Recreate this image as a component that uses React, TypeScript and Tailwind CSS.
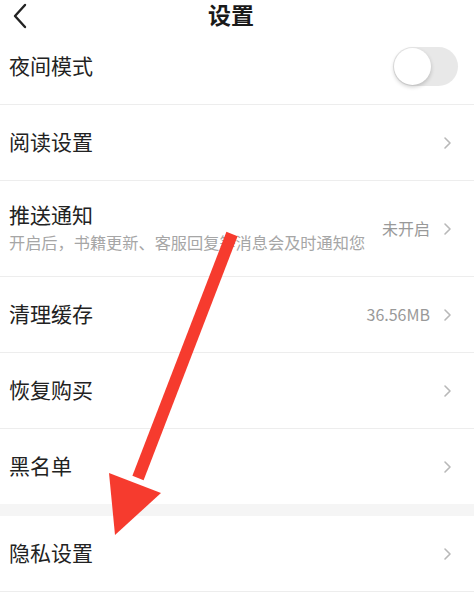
import React from "react";

const Chevron = () => (
  <svg width="10" height="14" viewBox="0 0 10 14" className="shrink-0">
    <path d="M3 2 L8 7 L3 12" fill="none" stroke="#b8b8b8" strokeWidth="1.6" strokeLinecap="round" strokeLinejoin="round" />
  </svg>
);

function Row({ title, sub, value, children }: { title: string; sub?: string; value?: string; children?: React.ReactNode }) {
  return (
    <div className={`flex items-center justify-between pl-[9px] pr-[22px] ${sub ? "h-[96px]" : "h-[76px]"} border-b border-[#ededed]`}>
      <div className="flex flex-col pb-[4px]">
        <span className="text-[21px] leading-[28px] text-[#222]">{title}</span>
        {sub && <span className="text-[16.2px] leading-[22px] text-[#a6a6a6] mt-[3px]">{sub}</span>}
      </div>
      {children ?? (
        <div className="flex items-center gap-[12px]">
          {value && <span className="text-[16px] text-[#999] pb-[2px]">{value}</span>}
          <Chevron />
        </div>
      )}
    </div>
  );
}

export default function App() {
  return (
    <div className="relative w-[474px] h-[600px] bg-white overflow-hidden" style={{ fontFamily: '"Noto Sans CJK SC", "Noto Sans", sans-serif' }}>
      <div className="relative h-[29px] flex items-center justify-center">
        <svg width="16" height="26" viewBox="0 0 16 26" className="absolute left-[12px] top-[3px]">
          <path d="M13 2 L3 13 L13 24" fill="none" stroke="#222" strokeWidth="2.4" strokeLinecap="round" strokeLinejoin="round" />
        </svg>
        <span className="text-[23px] font-bold text-[#1a1a1a] leading-[29px] mr-[12px]">设置</span>
      </div>
      <Row title="夜间模式">
        <div className="w-[65px] h-[39px] rounded-full bg-[#e8e8e8] relative mr-[-6px]">
          <div className="absolute left-[1px] top-[1px] w-[37px] h-[37px] rounded-full bg-white shadow-[0_2px_4px_rgba(0,0,0,0.2)]" />
        </div>
      </Row>
      <Row title="阅读设置" />
      <Row title="推送通知" sub="开启后，书籍更新、客服回复等消息会及时通知您" value="未开启" />
      <Row title="清理缓存" value="36.56MB" />
      <Row title="恢复购买" />
      <div className="flex items-center justify-between pl-[9px] pr-[22px] h-[75px]">
        <span className="text-[21px] leading-[28px] text-[#222] pb-[4px]">黑名单</span>
        <Chevron />
      </div>
      <div className="h-[12px] bg-[#f5f5f5]" />
      <Row title="隐私设置" />
      <svg className="absolute left-0 top-0 pointer-events-none" width="474" height="600" viewBox="0 0 474 600">
        <line x1="232" y1="234" x2="138" y2="478" stroke="#f63b2e" strokeWidth="12" strokeLinecap="butt" />
        <polygon points="109,473 161,493 115,535" fill="#f63b2e" />
      </svg>
    </div>
  );
}
